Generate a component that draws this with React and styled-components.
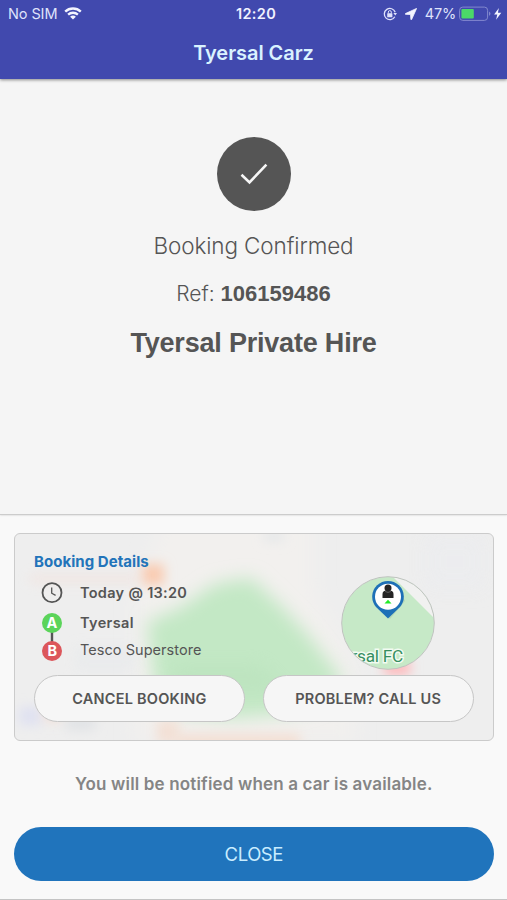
import styled, { createGlobalStyle } from 'styled-components';

const GlobalStyle = createGlobalStyle`
  * {
    box-sizing: border-box;
  }

  body {
    margin: 0;
    background-color: #f9f9f9;
    font-family: Inter, "Liberation Sans", sans-serif;
    color: #555555;
  }
`

const Screen = styled.div`
  display: flex;
  flex-direction: column;
  width: 507px;
  height: 900px;
  background-color: #f9f9f9;
  border-bottom: 1px solid #c4c4c4;
  white-space: nowrap;
  overflow: hidden;
`

const Header = styled.header`
  height: 79px;
  flex-shrink: 0;
  background-color: #4149ae;
  box-shadow: 0 1px 3px rgba(0, 0, 0, 0.45);
  position: relative;
`

const StatusBar = styled.div`
  display: grid;
  grid-template-columns: 1fr auto 1fr;
  align-items: center;
  height: 27px;
  padding: 0 5px 0 8px;
  color: #dfe2fb;
  font-size: 14.5px;
`

const StatusGroup = styled.div`
  display: flex;
  align-items: center;
  justify-content: ${(props) => (props.$end ? 'flex-end' : 'flex-start')};

  svg {
    flex-shrink: 0;
  }
`

const Carrier = styled.span`
  margin-right: 7px;
  letter-spacing: -0.1px;
`

const Time = styled.span`
  padding-left: 2px;
  color: #f1f2ff;
  font-weight: 600;
  letter-spacing: 0.35px;
`

const Percent = styled.span`
  margin: 0 3px 0 8px;
  letter-spacing: -0.2px;
`

const AppTitle = styled.h1`
  margin: 10px 0 0;
  color: #d9f2ff;
  font-size: 20px;
  font-weight: 600;
  line-height: 32px;
  letter-spacing: -0.05px;
  text-align: center;
`

const Summary = styled.section`
  display: flex;
  flex-direction: column;
  align-items: center;
  height: 436px;
  flex-shrink: 0;
  padding-top: 58px;
  background-color: #f5f5f5;
  border-bottom: 1px solid #cccccc;
  box-shadow: 0 0 2px rgba(0, 0, 0, 0.2);
`

const CheckCircle = styled.div`
  display: flex;
  align-items: center;
  justify-content: center;
  width: 74px;
  height: 74px;
  border-radius: 50%;
  background-color: #555555;
`

const Status = styled.p`
  margin: 20px 0 0;
  font-size: 22.5px;
  font-weight: 300;
  line-height: 30px;
  letter-spacing: -0.12px;
`

const Reference = styled.p`
  margin: 18px 0 0;
  font-size: 21px;
  font-weight: 300;
  line-height: 30px;

  b {
    font-family: "Liberation Sans", sans-serif;
    font-size: 22px;
    font-weight: 700;
  }
`

const Company = styled.h2`
  margin: 19px 0 0;
  font-family: "Liberation Sans", sans-serif;
  font-size: 27px;
  font-weight: 700;
  line-height: 30px;
  letter-spacing: -0.2px;
`

const Footer = styled.section`
  display: flex;
  flex-direction: column;
  padding: 18px 13.5px 0 14px;
`

const Card = styled.div`
  position: relative;
  height: 208px;
  padding: 17px 19px 0;
  border: 1px solid #cbcbcb;
  border-radius: 6px;
  background-color: #eeeeee;
  overflow: hidden;
`

const MapBackdrop = styled.svg`
  position: absolute;
  inset: 0;
`

const CardContent = styled.div`
  position: relative;
`

const CardTop = styled.div`
  display: flex;
  justify-content: space-between;
  height: 124px;
`

const CardTitle = styled.h3`
  margin: 0 0 10px;
  color: #2274ba;
  font-size: 15px;
  font-weight: 700;
  line-height: 21px;
  letter-spacing: 0.05px;
`

const Trip = styled.div`
  display: flex;
  gap: 17px;
  padding-left: 7px;
`

const TripIcons = styled.div`
  width: 22px;
  height: 80px;
`

const Row = styled.div`
  height: ${(props) => props.$height};
  font-size: 14.5px;
  font-weight: ${(props) => (props.$bold ? 600 : 400)};
  line-height: 22px;
  letter-spacing: ${(props) => props.$spacing || '0'};
`

const MapThumb = styled.svg`
  margin: 24.5px 38.5px 0 0;
  flex-shrink: 0;
`

const Actions = styled.div`
  display: grid;
  grid-template-columns: 1fr 1fr;
  gap: 18px;
`

const OutlineButton = styled.button`
  height: 47px;
  padding: 0;
  border: 1px solid #c6c6c6;
  border-radius: 24px;
  background-color: #f6f6f6;
  color: #555555;
  font-family: inherit;
  font-size: 14.5px;
  font-weight: 600;
  letter-spacing: 0.22px;
`

const Notice = styled.p`
  margin: 32px 0 0;
  color: #858585;
  font-size: 17px;
  font-weight: 600;
  line-height: 22px;
  letter-spacing: 0.16px;
  text-align: center;
`

const CloseButton = styled.button`
  height: 54px;
  margin-top: 32px;
  padding: 0 0 1px;
  border: 0;
  border-radius: 27px;
  background-color: #2074bc;
  color: #c9edff;
  font-family: inherit;
  font-size: 18.5px;
  font-weight: 400;
  letter-spacing: -0.45px;
`

function WifiIcon() {
  return (
    <svg width="18" height="13" viewBox="0 0 18 13" fill="none" stroke="#f4f5ff">
      <path d="M1.2 4.7C5.6 .5 12.4 .5 16.8 4.7" strokeWidth="2.4" />
      <path d="M4.1 7.7C6.9 5.1 11.1 5.1 13.9 7.7" strokeWidth="2.3" />
      <path d="M6.1 9.7C7.8 8.2 10.2 8.2 11.9 9.7L9 12.6Z" fill="#f4f5ff" stroke="none" />
    </svg>
  )
}

function RotationLockIcon() {
  return (
    <svg width="14" height="14" viewBox="0 0 14 14" fill="none" stroke="#dfe2fb">
      <path d="M12.2 5.2A5.6 5.6 0 1 0 11.8 9.8" strokeWidth="1.3" />
      <path d="M10.4 6H14L12.3 8.5Z" fill="#dfe2fb" stroke="none" />
      <rect x="4.2" y="6.2" width="5.2" height="4" rx=".5" fill="#dfe2fb" stroke="none" />
      <path d="M5.3 6.5V5.1a1.5 1.5 0 0 1 3 0v1.4" strokeWidth="1" />
    </svg>
  )
}

const LocationSvg = styled.svg`
  margin-left: 8px;
`

function LocationIcon() {
  return (
    <LocationSvg width="12" height="12" viewBox="0 0 12 12">
      <path d="M11.6 .4L.4 5.6V6.3L5.5 6.5 5.9 11.6H6.6Z" fill="#f4f5ff" stroke="#f4f5ff" strokeWidth=".8" strokeLinejoin="round" />
    </LocationSvg>
  )
}

function BatteryIcon() {
  return (
    <svg width="43" height="16" viewBox="0 0 43 16">
      <rect x=".6" y="1.1" width="28" height="13.3" rx="3.2" fill="none" stroke="#8389cf" />
      <rect x="2.4" y="3.1" width="12.4" height="9.3" rx="1" fill="#4bd968" />
      <path d="M30 5.6q3 2.1 0 4.3Z" fill="#8389cf" />
      <path d="M39.9 1.9L35.1 8.6H38.3L37.1 13.8 42.3 6.7H38.9Z" fill="#f4f5ff" />
    </svg>
  )
}

function TripMarkers() {
  return (
    <svg width="22" height="80" viewBox="0 0 22 80">
      <circle cx="11" cy="10.7" r="9.5" fill="none" stroke="#555" strokeWidth="1.8" />
      <path d="M10.7 5.4V11.2L14.6 13.4" fill="none" stroke="#555" strokeWidth="1.3" />
      <path d="M11 49V62" stroke="#555" strokeWidth="2.4" />
      <circle cx="11" cy="41" r="10" fill="#5bd45a" />
      <circle cx="11" cy="69" r="10" fill="#dc565b" />
      <g fill="#fff" fontFamily="Inter, sans-serif" fontSize="14.5" fontWeight="700" textAnchor="middle">
        <text x="11" y="46.3">A</text>
        <text x="11.2" y="74.3">B</text>
      </g>
    </svg>
  )
}

function Backdrop() {
  return (
    <MapBackdrop width="478" height="206" viewBox="0 0 478 206">
      <defs>
        <filter id="soft" x="-50%" y="-50%" width="200%" height="200%">
          <feGaussianBlur stdDeviation="9" />
        </filter>
        <filter id="spot" x="-150%" y="-200%" width="400%" height="500%">
          <feGaussianBlur stdDeviation="6" />
        </filter>
      </defs>
      <path d="M150 -20H300V60L340 130V206H120V60Z" fill="#f2f0ee" filter="url(#soft)" />
      <path d="M200 50L236 44 268 74 292 100 328 146 304 170 268 180 215 184 160 178 140 158 132 88 165 74Z" fill="#c3e8c5" filter="url(#soft)" />
      <path d="M155 130H245L275 160H165Z" fill="#b5dfb8" opacity=".4" filter="url(#soft)" />
      <rect x="127" y="30" width="22" height="21" fill="#f9cbb1" filter="url(#spot)" />
      <rect x="15" y="41" width="110" height="8" fill="#f3e1dc" opacity=".7" filter="url(#spot)" />
      <rect x="249" y="-2" width="20" height="9" fill="#e3e6e8" filter="url(#spot)" />
      <rect x="410" y="0" width="60" height="55" fill="#ebecef" opacity=".7" filter="url(#soft)" />
      <rect x="369" y="126" width="26" height="15" fill="#ffb7ba" filter="url(#spot)" />
      <rect x="4" y="173" width="23" height="18" fill="#dfe1f1" filter="url(#spot)" />
      <rect x="29" y="172" width="18" height="15" fill="#f3dfd6" filter="url(#spot)" />
      <rect x="51" y="182" width="29" height="14" fill="#e0e2e5" filter="url(#spot)" />
      <rect x="142" y="186" width="22" height="24" fill="#f3e0d5" filter="url(#spot)" />
      <rect x="160" y="200" width="125" height="16" fill="#f4dfd3" filter="url(#spot)" />
      <rect x="60" y="112" width="60" height="26" fill="#e8eaec" opacity=".7" filter="url(#spot)" />
    </MapBackdrop>
  )
}

function PickupMap() {
  return (
    <MapThumb width="94" height="94" viewBox="0 0 94 94">
      <defs>
        <clipPath id="thumb">
          <circle cx="47" cy="47" r="46" />
        </clipPath>
      </defs>
      <g clipPath="url(#thumb)">
        <rect width="94" height="94" fill="#c6e9c7" />
        <path d="M51 0H94V43Z" fill="#f1f1f0" />
        <text x="10.5" y="86.2" fill="#368e60" stroke="#f2fbf2" strokeWidth="3" paintOrder="stroke" fontFamily="Roboto, sans-serif" fontSize="17.2" letterSpacing="-.25">rsal FC</text>
      </g>
      <circle cx="47" cy="47" r="46.3" fill="none" stroke="#bec3be" />
      <path d="M49 43L37 31 58 13 64 25Z" fill="#8fb292" opacity=".3" />
      <path d="M47 42.5L35 31A15.8 15.8 0 1 1 59 31Z" fill="#1d70b7" />
      <circle cx="47" cy="20.7" r="13" fill="#fff" />
      <circle cx="47" cy="12" r="3.5" fill="#252525" />
      <path d="M41.5 22V18q0-3.6 4-3.6h3q4 0 4 3.6v4Z" fill="#252525" />
      <path d="M44.2 15.5q2.8 1.8 5.6 0" fill="none" stroke="#777" strokeWidth=".7" />
      <path d="M43.5 27.5L47 23.8 50.5 27.5Z" fill="#21eb27" />
    </MapThumb>
  )
}

export default function App() {
  return (
    <>
      <GlobalStyle />
      <Screen>
        <Header>
          <StatusBar>
            <StatusGroup>
              <Carrier>No SIM</Carrier>
              <WifiIcon />
            </StatusGroup>
            <Time>12:20</Time>
            <StatusGroup $end>
              <RotationLockIcon />
              <LocationIcon />
              <Percent>47%</Percent>
              <BatteryIcon />
            </StatusGroup>
          </StatusBar>
          <AppTitle>Tyersal Carz</AppTitle>
        </Header>
        <Summary>
          <CheckCircle>
            <svg width="28" height="22" viewBox="0 0 28 22" fill="none" stroke="#f7f7f7" strokeWidth="2.6">
              <path d="M1.5 11.8L9.5 19.4 26.4 1.6" />
            </svg>
          </CheckCircle>
          <Status>Booking Confirmed</Status>
          <Reference>Ref: <b>106159486</b></Reference>
          <Company>Tyersal Private Hire</Company>
        </Summary>
        <Footer>
          <Card>
            <Backdrop />
            <CardContent>
              <CardTop>
                <div>
                  <CardTitle>Booking Details</CardTitle>
                  <Trip>
                    <TripIcons>
                      <TripMarkers />
                    </TripIcons>
                    <div>
                      <Row $height="30px" $bold $spacing="0.3px">Today @ 13:20</Row>
                      <Row $height="27px" $bold $spacing="0.35px">Tyersal</Row>
                      <Row $height="22px" $spacing="0.05px">Tesco Superstore</Row>
                    </div>
                  </Trip>
                </div>
                <PickupMap />
              </CardTop>
              <Actions>
                <OutlineButton>CANCEL BOOKING</OutlineButton>
                <OutlineButton>PROBLEM? CALL US</OutlineButton>
              </Actions>
            </CardContent>
          </Card>
          <Notice>You will be notified when a car is available.</Notice>
          <CloseButton>CLOSE</CloseButton>
        </Footer>
      </Screen>
    </>
  )
}
